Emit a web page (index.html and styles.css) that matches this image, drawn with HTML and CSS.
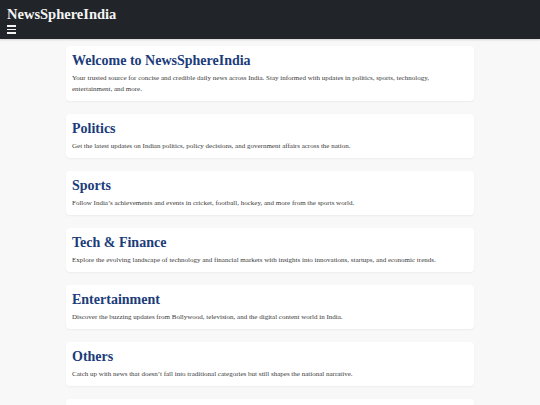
FILE: index.html
```html
<!DOCTYPE html>
<html lang="en">
<head>
<meta charset="utf-8">
<title>NewsSphereIndia</title>
<link rel="stylesheet" href="styles.css">
</head>
<body>
<header class="site-header">
  <div class="brand">NewsSphereIndia</div>
  <button class="menu-toggle" aria-label="Menu">
    <span></span><span></span><span></span>
  </button>
</header>
<main class="content">
  <section class="card">
    <h1 class="card-title">Welcome to NewsSphereIndia</h1>
    <p class="card-text">Your trusted source for concise and credible daily news across India. Stay informed with updates in politics, sports, technology, entertainment, and more.</p>
  </section>
  <section class="card">
    <h2 class="card-title">Politics</h2>
    <p class="card-text">Get the latest updates on Indian politics, policy decisions, and government affairs across the nation.</p>
  </section>
  <section class="card">
    <h2 class="card-title">Sports</h2>
    <p class="card-text">Follow India’s achievements and events in cricket, football, hockey, and more from the sports world.</p>
  </section>
  <section class="card">
    <h2 class="card-title">Tech &amp; Finance</h2>
    <p class="card-text">Explore the evolving landscape of technology and financial markets with insights into innovations, startups, and economic trends.</p>
  </section>
  <section class="card">
    <h2 class="card-title">Entertainment</h2>
    <p class="card-text">Discover the buzzing updates from Bollywood, television, and the digital content world in India.</p>
  </section>
  <section class="card">
    <h2 class="card-title">Others</h2>
    <p class="card-text">Catch up with news that doesn’t fall into traditional categories but still shapes the national narrative.</p>
  </section>
  <section class="card">
    <h2 class="card-title">Contact</h2>
    <p class="card-text">Reach out to us with feedback, story tips, or partnership enquiries.</p>
  </section>
</main>
</body>
</html>
```
FILE: styles.css
```css
* { box-sizing: border-box; }
html, body {
  margin: 0;
  padding: 0;
}
body {
  background: #f8f8f8;
  font-family: "Liberation Serif", "DejaVu Serif", serif;
  color: #333;
}
.site-header {
  background: #212529;
  height: 39px;
  padding: 6px 7px 0;
  display: flex;
  flex-direction: column;
  align-items: flex-start;
  box-shadow: 0 1px 2px rgba(0,0,0,0.15);
}
.brand {
  color: #f4f4f4;
  font-weight: bold;
  font-size: 14.5px;
  line-height: 17px;
}
.menu-toggle {
  background: none;
  border: 0;
  padding: 2px 0 0;
  display: flex;
  flex-direction: column;
  gap: 2px;
  cursor: pointer;
}
.menu-toggle span {
  display: block;
  width: 9px;
  height: 1.5px;
  background: #f4f4f4;
}
.content {
  max-width: 408px;
  margin: 0 auto;
  padding-top: 7px;
}
.card {
  background: #fff;
  border-radius: 4px;
  padding: 6px;
  margin-bottom: 13.5px;
  box-shadow: 0 1px 2px rgba(0,0,0,0.05);
}
.card-title {
  margin: 0 0 3.5px;
  font-size: 14px;
  line-height: 17px;
  font-weight: bold;
  color: #1b3c7a;
}
.card-text {
  margin: 0;
  font-size: 7px;
  line-height: 11px;
  color: #3a3a3a;
}
```
